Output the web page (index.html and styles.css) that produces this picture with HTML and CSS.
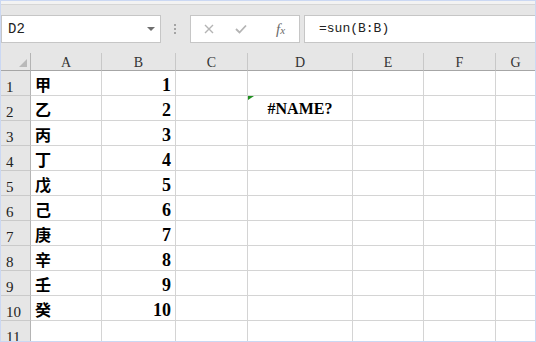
FILE: index.html
```html
<!DOCTYPE html>
<html>
<head>
<meta charset="utf-8">
<link rel="stylesheet" href="styles.css">
</head>
<body>
<div class="app">
  <div class="topstrip"></div>
  <div class="toolbar">
    <div class="namebox">
      <span class="name">D2</span>
      <span class="arrow"></span>
    </div>
    <div class="sep"><i></i><i></i><i></i></div>
    <div class="fxbox">
      <svg class="ico-x" width="10" height="10" viewBox="0 0 10 10"><path d="M1 1L9 9M9 1L1 9" stroke="#b4b4b4" stroke-width="1.4" fill="none"/></svg>
      <svg class="ico-check" width="12" height="10" viewBox="0 0 12 10"><path d="M1 5L4.5 8.5L11 1.5" stroke="#b4b4b4" stroke-width="1.8" fill="none"/></svg>
      <span class="fx">f<span class="fxx">x</span></span>
    </div>
    <div class="formula">=sun(B:B)</div>
  </div>
  <div class="grid">
    <div class="corner"><span class="tri"></span></div>
    <div class="ch">A</div><div class="ch">B</div><div class="ch">C</div><div class="ch">D</div><div class="ch">E</div><div class="ch">F</div><div class="ch last">G</div>

    <div class="rh">1</div><div class="c txt">甲</div><div class="c num">1</div><div class="c"></div><div class="c"></div><div class="c"></div><div class="c"></div><div class="c last"></div>
    <div class="rh">2</div><div class="c txt">乙</div><div class="c num">2</div><div class="c"></div><div class="c err"><span class="flag"></span>#NAME?</div><div class="c"></div><div class="c"></div><div class="c last"></div>
    <div class="rh">3</div><div class="c txt">丙</div><div class="c num">3</div><div class="c"></div><div class="c"></div><div class="c"></div><div class="c"></div><div class="c last"></div>
    <div class="rh">4</div><div class="c txt">丁</div><div class="c num">4</div><div class="c"></div><div class="c"></div><div class="c"></div><div class="c"></div><div class="c last"></div>
    <div class="rh">5</div><div class="c txt">戊</div><div class="c num">5</div><div class="c"></div><div class="c"></div><div class="c"></div><div class="c"></div><div class="c last"></div>
    <div class="rh">6</div><div class="c txt">己</div><div class="c num">6</div><div class="c"></div><div class="c"></div><div class="c"></div><div class="c"></div><div class="c last"></div>
    <div class="rh">7</div><div class="c txt">庚</div><div class="c num">7</div><div class="c"></div><div class="c"></div><div class="c"></div><div class="c"></div><div class="c last"></div>
    <div class="rh">8</div><div class="c txt">辛</div><div class="c num">8</div><div class="c"></div><div class="c"></div><div class="c"></div><div class="c"></div><div class="c last"></div>
    <div class="rh">9</div><div class="c txt">壬</div><div class="c num">9</div><div class="c"></div><div class="c"></div><div class="c"></div><div class="c"></div><div class="c last"></div>
    <div class="rh">10</div><div class="c txt">癸</div><div class="c num">10</div><div class="c"></div><div class="c"></div><div class="c"></div><div class="c"></div><div class="c last"></div>
    <div class="rh">11</div><div class="c"></div><div class="c"></div><div class="c"></div><div class="c"></div><div class="c"></div><div class="c"></div><div class="c last"></div>
  </div>
</div>
</body>
</html>
```

FILE: styles.css
```css
html, body {
  margin: 0;
  padding: 0;
  background: #fff;
}
.app {
  width: 536px;
  height: 342px;
  box-sizing: border-box;
  border: 1px solid #cbd8f3;
  overflow: hidden;
  background: #fff;
  display: flex;
  flex-direction: column;
}
.topstrip {
  height: 3px;
  flex: none;
  background: #f3f3f3;
  border-bottom: 1px solid #d6d6d6;
}
.toolbar {
  flex: none;
  height: 48px;
  box-sizing: border-box;
  padding-top: 10px;
  background: #e6e6e6;
  display: flex;
  align-items: flex-start;
}
.namebox {
  width: 160px;
  height: 28px;
  box-sizing: border-box;
  border: 1px solid #c6c6c6;
  background: #fff;
  display: flex;
  align-items: center;
  justify-content: space-between;
  padding: 0 5px 0 6px;
}
.name {
  font-family: "Liberation Mono", monospace;
  font-size: 14px;
  color: #222;
}
.arrow {
  width: 0;
  height: 0;
  border-left: 4px solid transparent;
  border-right: 4px solid transparent;
  border-top: 4px solid #6e6e6e;
}
.sep {
  width: 28px;
  margin-right: 1px;
  height: 28px;
  display: flex;
  flex-direction: column;
  align-items: center;
  justify-content: center;
  gap: 2px;
}
.sep i {
  display: block;
  width: 2px;
  height: 2px;
  background: #a4a4a4;
}
.fxbox {
  width: 110px;
  height: 28px;
  box-sizing: border-box;
  border: 1px solid #c6c6c6;
  background: #fff;
  display: flex;
  align-items: center;
  padding-left: 13px;
}
.ico-check {
  margin-left: 21px;
}
.fx {
  margin-left: 29px;
  font-family: "Liberation Serif", serif;
  font-style: italic;
  font-size: 15px;
  color: #6a6a6a;
}
.fxx {
  font-size: 11px;
}
.formula {
  flex: 1;
  margin-left: 4px;
  height: 28px;
  box-sizing: border-box;
  border: 1px solid #c6c6c6;
  border-right: none;
  background: #fff;
  padding-left: 14px;
  font-family: "Liberation Mono", monospace;
  font-size: 13px;
  line-height: 26px;
  color: #222;
}
.grid {
  flex: 1;
  display: grid;
  grid-template-columns: 30px 71px 74px 72px 105px 71px 72px 1fr;
  grid-template-rows: 18px repeat(10, 25px) 1fr;
}
.grid > div {
  box-sizing: border-box;
  border-right: 1px solid #d4d4d4;
  border-bottom: 1px solid #d4d4d4;
}
.grid > .last {
  border-right: none;
}
.corner {
  background: #e6e6e6;
  position: relative;
}
.grid > .corner {
  border-right: 1px solid #b4b4b4;
  border-bottom: 1px solid #a6a6a6;
}
.tri {
  position: absolute;
  right: 3px;
  bottom: 3px;
  width: 0;
  height: 0;
  border-left: 8px solid transparent;
  border-bottom: 8px solid #b9b9b9;
}
.grid > .ch {
  background: #e6e6e6;
  border-right: 1px solid #c8c8c8;
  border-bottom: 1px solid #a6a6a6;
  font-family: "Liberation Serif", serif;
  font-size: 14px;
  line-height: 16px;
  color: #333;
  text-align: center;
  padding-top: 2px;
}
.grid > .ch.last {
  border-right: none;
}
.grid > .rh {
  background: #e6e6e6;
  border-right: 1px solid #b4b4b4;
  border-bottom: 1px solid #cacaca;
  font-family: "Liberation Serif", serif;
  font-size: 15px;
  line-height: 16px;
  color: #222;
  padding: 8px 0 0 5px;
}
.c {
  background: #fff;
}
.txt {
  font-family: "Noto Sans CJK SC", sans-serif;
  font-weight: 700;
  font-size: 16px;
  line-height: 20px;
  padding: 3px 0 0 4px;
  color: #000;
}
.num {
  font-family: "Liberation Serif", serif;
  font-weight: bold;
  font-size: 18px;
  line-height: 20px;
  text-align: right;
  padding: 4px 4px 0 0;
  color: #000;
}
.err {
  position: relative;
  font-family: "Liberation Serif", serif;
  font-weight: bold;
  font-size: 16px;
  line-height: 20px;
  text-align: center;
  padding-top: 3px;
  color: #000;
}
.flag {
  position: absolute;
  left: 0;
  top: 0;
  width: 0;
  height: 0;
  border-top: 4px solid #1f8f1f;
  border-right: 6px solid transparent;
}
```
